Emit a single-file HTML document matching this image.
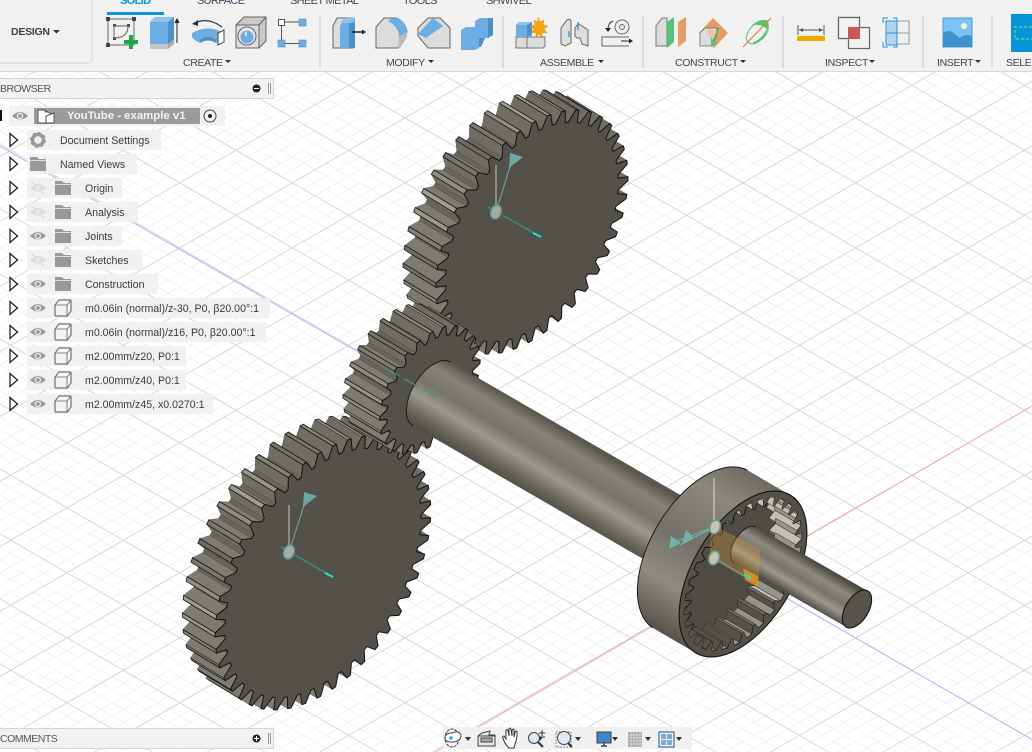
<!DOCTYPE html>
<html><head><meta charset="utf-8"><style>
html,body{margin:0;padding:0;width:1032px;height:752px;overflow:hidden;background:#fff;font-family:"Liberation Sans",sans-serif}
svg{position:absolute;left:0;top:0}
.t{position:absolute;white-space:nowrap}
.tab{font-size:11px;color:#3c4a5c;top:-5px;letter-spacing:-.65px}
.lab{font-size:10.5px;color:#445;top:57px;letter-spacing:-.35px}
.p{position:absolute;left:27px;height:20px;background:rgba(240,240,240,.92)}
.r{position:absolute;font-size:10.6px;color:#3a3a3a;white-space:nowrap;line-height:20px;margin-top:1px}
</style></head><body>
<svg id="scene" width="1032" height="752" xmlns="http://www.w3.org/2000/svg"></svg>

<div style="position:absolute;left:0;top:0;width:1032px;height:71px;background:#f1f1f1;border-bottom:1px solid #d9d9d9"></div>
<div style="position:absolute;left:-6px;top:-4px;width:95px;height:64px;border:2px solid #e2e2e2;border-radius:6px"></div>
<div class="t" style="left:11px;top:26px;font-size:10.5px;font-weight:bold;color:#3a3f48;letter-spacing:-.25px">DESIGN</div>
<div class="t tab" style="left:120px;color:#0696d7;font-weight:bold">SOLID</div>
<div class="t tab" style="left:197px">SURFACE</div>
<div class="t tab" style="left:290px">SHEET METAL</div>
<div class="t tab" style="left:403px">TOOLS</div>
<div class="t tab" style="left:486px">SHWIVEL</div>
<div style="position:absolute;left:107px;top:12px;width:57px;height:2.5px;background:#0696d7"></div>
<div class="t lab" style="left:183px">CREATE</div>
<div class="t lab" style="left:386px">MODIFY</div>
<div class="t lab" style="left:540px">ASSEMBLE</div>
<div class="t lab" style="left:675px">CONSTRUCT</div>
<div class="t lab" style="left:825px">INSPECT</div>
<div class="t lab" style="left:937px">INSERT</div>
<div class="t lab" style="left:1006px">SELECT</div>

<svg width="1032" height="72" xmlns="http://www.w3.org/2000/svg">
<g fill="#333"><path d="M53 30h7l-3.500 3.500z"/><path d="M225 60h6l-3 3z"/><path d="M428 60h6l-3 3z"/><path d="M598 60h6l-3 3z"/><path d="M740 60h6l-3 3z"/><path d="M869 60h6l-3 3z"/><path d="M975 60h6l-3 3z"/></g>
<g fill="#dcdcdc"><rect x="319" y="16" width="2" height="52"/><rect x="502" y="16" width="2" height="52"/><rect x="642" y="16" width="2" height="52"/><rect x="782" y="16" width="2" height="52"/><rect x="922" y="16" width="2" height="52"/><rect x="991" y="16" width="2" height="52"/></g>

<!-- create sketch -->
<rect x="108" y="19" width="26" height="26" fill="none" stroke="#666"/>
<g fill="#444"><rect x="106" y="17" width="4" height="4"/><rect x="132" y="17" width="4" height="4"/><rect x="106" y="43" width="4" height="4"/><rect x="113" y="24" width="3" height="3"/><rect x="113" y="37" width="3" height="3"/><rect x="127" y="24" width="3" height="3"/></g>
<path d="M114 38V26H128Q128 38 114 38" fill="none" stroke="#777" stroke-width="1.200"/>
<path d="M131 35v14M124 42h14" stroke="#1fa648" stroke-width="4"/>
<!-- extrude -->
<path d="M150 44V22l5-5h19v23l-6 4z" fill="#6caee3"/><path d="M168 22v22l6-5V17z" fill="#4c90c8"/><path d="M150 22l5-5h19l-6 5z" fill="#8cc3ec"/>
<path d="M150 44h18v5h-18z" fill="#c4c4c4"/><path d="M168 44l6-5v5l-6 5z" fill="#aaa"/>
<path d="M177 43V20M175 23l2-4 2 4" stroke="#222" fill="#222"/>
<!-- revolve -->
<path d="M192 33q16-9 32 0l0 4q-4 6-8 6-8-5-16 0-5-2-8-6z" fill="#6caee3"/><path d="M200 43q0-3 0-3 8-6 16 0v3q-8-5-16 0z" fill="#4c90c8"/>
<path d="M218 33l6-3v12l-6 3z" fill="#fff" stroke="#444"/>
<path d="M193 24q14-8 29 3" fill="none" stroke="#333" stroke-width="1.200"/><path d="M192 24l6-4v6z" fill="#333"/>
<!-- hole -->
<path d="M236 25l8-8h22v24l-7 7h-23z" fill="#c9c9c9" stroke="#666"/><path d="M236 25h23v23h-23z" fill="#dcdcdc" stroke="#666"/><path d="M259 25l7-8" stroke="#666"/>
<circle cx="247" cy="36" r="9" fill="#e8e8e8" stroke="#666"/><circle cx="247" cy="37" r="6.500" fill="#6caee3"/><path d="M247 31a6 6 0 0 0-3 3l3 3z" fill="#e4e4e4"/>
<!-- pattern -->
<rect x="278.500" y="19.500" width="6" height="6" fill="#fff" stroke="#555"/><g fill="#6caee3" stroke="#4b8fc8" stroke-width=".6"><rect x="299" y="19" width="7" height="7"/><rect x="278" y="40" width="7" height="7"/><rect x="299" y="40" width="7" height="7"/></g><path d="M285 22h14M281.500 26v14M285 43.500h14" stroke="#555"/>
<!-- press pull -->
<path d="M333 48V26l4-8h16v30z" fill="#dcdcdc" stroke="#666"/><path d="M340 48V26l5-8h10v30z" fill="#6caee3"/><path d="M349 23h6v25h-6z" fill="#4c90c8"/><path d="M340 23h11l4-5h-10z" fill="#8cc3ec"/>
<path d="M352 32h10" stroke="#222" stroke-width="1.500"/><path d="M362 29.500l4 2.500-4 2.500z" fill="#222"/>
<!-- fillet -->
<path d="M376 48V27l8-9h12q9 3 11 14l-2 4-7 12z" fill="#dcdcdc" stroke="#666"/><path d="M388 21q3-3 8-3 10 3 11 14l-8 5q0-10-11-16z" fill="#6caee3"/><path d="M399 37l8-5v5l-7 11h-2z" fill="#bbb"/>
<!-- chamfer -->
<path d="M418 36V28l10-10h12l10 10v20h-22z" fill="#dcdcdc" stroke="#666"/><path d="M418 34l15-16 10 8-17 12z" fill="#6caee3"/>
<!-- combine -->
<path d="M461 30l5-3h9v-6l5-3h13v17l-5 3h-9v10l-4 2h-14z" fill="#6caee3"/><path d="M488 18h5v17l-5 3zM479 38h6l-4 9h-2z" fill="#4c90c8"/>
<!-- assemble -->
<path d="M516 37h29v9l-2 2h-27z" fill="#dcdcdc" stroke="#777"/><path d="M527 37v11" stroke="#777"/><path d="M516 25l3-3h13v15h-16z" fill="#6caee3"/><path d="M527 25l5-3v12l-5 3z" fill="#4c90c8"/><path d="M516 25l3-3h13l-5 3z" fill="#8cc3ec"/>
<path d="M538 17l2 5 4-2-1 5 5 1-4 3 3 4-5-.5 0 5-3-3.500-3 3.500v-5l-5 .5 3-4-4-3 5-1-1-5 4 2z" fill="#f5a30f" stroke="#e08a00" stroke-width=".4"/>
<path d="M561 44V28l6-8q4-2 4 2v21l-6 3z" fill="#ddd" stroke="#666"/><path d="M575 36V28l3-4 1 0 9 6v16l-6-2-2-6h-3z" fill="#ddd" stroke="#666"/><path d="M569 31v6M578 22v8" stroke="#1c8fd6" stroke-width="1.200"/>
<circle cx="622" cy="27" r="7" fill="none" stroke="#666"/><circle cx="622" cy="27" r="2.500" fill="none" stroke="#666"/><path d="M613 21q-5 2-5 8" fill="none" stroke="#333"/><path d="M605 28h6l-3 4z" fill="#222"/><path d="M629 37h-27v9h27" fill="none" stroke="#666"/><path d="M621 41h8" stroke="#222"/><path d="M629 38.500l4 2.500-4 2.500z" fill="#222"/>
<!-- construct -->
<path d="M656 46V26l6-8h5v28z" fill="#dcdcdc" stroke="#777"/><path d="M667 22l7-5v25l-7 6z" fill="#58c178"/><path d="M678 22l8-5v24l-8 6z" fill="#e49c64"/>
<path d="M713 18l15 15-14 15-15-15z" fill="#e49c64"/><path d="M700 33l5-5 12 0-1 10-5 8h-11z" fill="#ddd" stroke="#666" stroke-width=".8"/><path d="M706 28l11 3-5 12z" fill="#e8c8a8"/><path d="M711 45l8-17" stroke="#3bb868" stroke-width="1.200"/><path d="M711 38l6 5-6 4z" fill="#58c178"/>
<path d="M746 38q3-13 15-17 7-2 7 3 2 12-12 19-8 3-10-5z" fill="none" stroke="#58c178" stroke-width="1"/><path d="M752 25q8-7 15-4 3 3 0 9-3-6-15-5z" fill="#58c178"/><path d="M753 42q8-2 13-12l1 0q-3 11-14 14z" fill="#58c178"/><path d="M743 47l28-29" stroke="#e4803c" stroke-width="1.200"/>
<!-- inspect -->
<rect x="797" y="36" width="28" height="5" fill="#f5a800"/><path d="M798 25v10M824 25v10" stroke="#555"/><path d="M799 30h24" stroke="#555"/><path d="M799 30l4-2v4zM823 30l-4-2v4z" fill="#555"/>
<rect x="838.500" y="17.500" width="21" height="21" fill="none" stroke="#666" stroke-width="1.200"/><rect x="848.500" y="27.500" width="21" height="21" fill="#f1f1f1" stroke="#666" stroke-width="1.200"/><path d="M838 18h21v10h-11v10h-10z" fill="#f1f1f1"/><path d="M838.500 38.500v-21h21v10M848.500 38.500h-10" fill="none" stroke="#666" stroke-width="1.200"/><rect x="848" y="27" width="12" height="12" fill="#cc5555"/>
<rect x="886" y="21" width="11" height="12" fill="#b2d4ef" stroke="#2d90d8"/><rect x="886" y="33" width="11" height="12" fill="#b2d4ef" stroke="#2d90d8"/><path d="M897 21h12v12h-12M897 33h12v11h-12" fill="none" stroke="#999"/><path d="M883 23v-5h5M883 42v5h5M893 18h4v29h-4" fill="none" stroke="#2d90d8"/>
<!-- insert -->
<rect x="943" y="18" width="29" height="29" fill="#7cc2f2" stroke="#4a9ad2"/><path d="M943 47V34q4-5 9-2 4 3 8 6 5-5 12-2v11z" fill="#4092cc"/><circle cx="964" cy="26" r="3" fill="#f6f5d0"/>
<!-- select -->
<rect x="1011" y="14" width="21" height="38" fill="#0696d7"/><path d="M1032 27h-17v12h17" fill="none" stroke="#8ce07a" stroke-dasharray="3 2"/>
</svg>

<!-- Browser panel -->
<div style="position:absolute;left:-2px;top:78px;width:274px;height:19px;background:#f2f2f2;border:1px solid #d4d4d4"></div>
<div class="t" style="left:0;top:83px;font-size:10.5px;color:#555;letter-spacing:-.5px">BROWSER</div>
<svg width="280" height="100" style="top:78px"><circle cx="256.500" cy="10.500" r="4" fill="#222"/><path d="M254 10.500h5" stroke="#fff"/><path d="M268.500 5v11M270.500 5v11" stroke="#999"/></svg>

<div class="p" style="left:9px;top:106px;width:216px"></div>
<div style="position:absolute;left:34px;top:108px;width:166px;height:16px;background:#9b9b9b"></div>
<div class="t" style="left:67px;top:110px;font-size:11.4px;font-weight:bold;color:#f4f4f4">YouTube - example v1</div>
<div class="p" style="top:130px;width:134px"></div><div class="r" style="left:60px;top:130px">Document Settings</div>
<div class="p" style="top:154px;width:110px"></div><div class="r" style="left:60px;top:154px">Named Views</div>
<div class="p" style="top:178px;width:95px"></div><div class="r" style="left:85px;top:178px">Origin</div>
<div class="p" style="top:202px;width:111px"></div><div class="r" style="left:85px;top:202px">Analysis</div>
<div class="p" style="top:226px;width:95px"></div><div class="r" style="left:85px;top:226px">Joints</div>
<div class="p" style="top:250px;width:115px"></div><div class="r" style="left:85px;top:250px">Sketches</div>
<div class="p" style="top:274px;width:131px"></div><div class="r" style="left:85px;top:274px">Construction</div>
<div class="p" style="top:298px;width:243px"></div><div class="r" style="left:85px;top:298px">m0.06in (normal)/z-30, P0, β20.00°:1</div>
<div class="p" style="top:322px;width:239px"></div><div class="r" style="left:85px;top:322px">m0.06in (normal)/z16, P0, β20.00°:1</div>
<div class="p" style="top:346px;width:159px"></div><div class="r" style="left:85px;top:346px">m2.00mm/z20, P0:1</div>
<div class="p" style="top:370px;width:159px"></div><div class="r" style="left:85px;top:370px">m2.00mm/z40, P0:1</div>
<div class="p" style="top:394px;width:186px"></div><div class="r" style="left:85px;top:394px">m2.00mm/z45, x0.0270:1</div>

<svg width="300" height="430">
<defs>
<g id="tri"><path d="M10 -6.500L17.500 0 10 6.500z" fill="#fff" stroke="#222" stroke-width="1.300"/></g>
<g id="eye"><path d="M-8 0Q0-8 8 0 0 7-8 0z" fill="#999"/><circle r="3.200" fill="#e8e8e8"/><circle r="1.900" fill="#999"/></g>
<g id="eyeoff" opacity=".55"><path d="M-8 0Q0-8 8 0 0 7-8 0z" fill="#ccc"/><circle r="2.500" fill="#eee"/><path d="M-6-6L6 6" stroke="#ccc" stroke-width="1.500"/></g>
<g id="fold"><path d="M-8-7h7l2 2h7v12h-16z" fill="#999"/><path d="M-8-3.500h16" stroke="#eee" stroke-width=".8"/></g>
<g id="box"><path d="M-8-3l4-5h11q1 0 1 1v10l-3 4q0 1-1 1h-11q-1 0-1-1z" fill="#f4f4f4" stroke="#555"/><path d="M-8-3h12v11M4-3l4-5" fill="none" stroke="#666" stroke-width=".8"/></g>
</defs>
<rect x="0" y="110" width="2" height="11" fill="#111"/>
<use href="#eye" x="20" y="116"/>
<path d="M38 110h6l2 2v-1l5 3 3-1v10h-16z" fill="#fff" stroke="#555"/><path d="M46 116l8-3M46 116v8" stroke="#555"/>
<circle cx="210" cy="116" r="6" fill="none" stroke="#444"/><circle cx="210" cy="116" r="2" fill="#222"/>
<use href="#tri" y="140"/><use href="#tri" y="164"/><use href="#tri" y="188"/><use href="#tri" y="212"/><use href="#tri" y="236"/><use href="#tri" y="260"/><use href="#tri" y="284"/><use href="#tri" y="308"/><use href="#tri" y="332"/><use href="#tri" y="356"/><use href="#tri" y="380"/><use href="#tri" y="404"/>
<circle cx="38" cy="140" r="5.500" fill="none" stroke="#999" stroke-width="3.500"/><circle cx="38" cy="140" r="7" fill="none" stroke="#999" stroke-width="2" stroke-dasharray="2.500 3"/>
<use href="#fold" x="38" y="164"/>
<use href="#eyeoff" x="38" y="188"/><use href="#eyeoff" x="38" y="212"/><use href="#eye" x="38" y="236"/><use href="#eyeoff" x="38" y="260"/><use href="#eye" x="38" y="284"/><use href="#eye" x="38" y="308"/><use href="#eye" x="38" y="332"/><use href="#eye" x="38" y="356"/><use href="#eye" x="38" y="380"/><use href="#eye" x="38" y="404"/>
<use href="#fold" x="63" y="188"/><use href="#fold" x="63" y="212"/><use href="#fold" x="63" y="236"/><use href="#fold" x="63" y="260"/><use href="#fold" x="63" y="284"/>
<use href="#box" x="63" y="308"/><use href="#box" x="63" y="332"/><use href="#box" x="63" y="356"/><use href="#box" x="63" y="380"/><use href="#box" x="63" y="404"/>
</svg>

<!-- Comments -->
<div style="position:absolute;left:-2px;top:728px;width:274px;height:19px;background:#f2f2f2;border:1px solid #d4d4d4"></div>
<div class="t" style="left:0;top:733px;font-size:10.5px;color:#555;letter-spacing:-.5px">COMMENTS</div>
<!-- Nav bar -->
<div style="position:absolute;left:443px;top:727px;width:249px;height:22px;background:#f0f0f0"></div>
<svg width="1032" height="752">
<circle cx="256.500" cy="738.500" r="4" fill="#222"/><path d="M254 738.500h5M256.500 736v5" stroke="#fff"/><path d="M268.500 733v11M270.500 733v11" stroke="#999"/>
<g transform="translate(430,720)">
<ellipse cx="22" cy="18" rx="7" ry="9" fill="none" stroke="#444" stroke-dasharray="3 1"/><path d="M15 18q0-5 7-5 7-3 9 2 0 7-9 7-7 0-7-4z" fill="#fff" stroke="#444"/><path d="M19 18h4M21 16v4" stroke="#1a8fd6" stroke-width="1.300"/>
<path d="M35 17h6l-3 4zM107 17h6l-3 4zM145 17h6l-3 4zM182 17h6l-3 4zM215 17h6l-3 4zM246 17h6l-3 4z" fill="#333"/>
<path d="M48 16l4-3 8-2-1 4h6v11H48z" fill="#e6e6e6" stroke="#444"/><rect x="51" y="18" width="11" height="4" fill="#aaa" stroke="#444"/><path d="M48 16h17" stroke="#444"/>
<path d="M79 28q-5-5-6-10-1-2 1-2l2 3V11q0-2 2-1l1 6V9q1-2 2 0l1 7V10q2-2 2 0v7l1-5q2-2 2 0 0 8-2 12l-1 4z" fill="#fff" stroke="#333"/>
<circle cx="104" cy="18" r="5.500" fill="#dfeaf4" stroke="#444"/><path d="M108 22l5 5" stroke="#333" stroke-width="2"/><path d="M109 13h6M112 10v6M109 17h6" stroke="#333"/>
<rect x="126" y="12" width="15" height="15" fill="none" stroke="#666" stroke-dasharray="1.500 1.500"/><circle cx="134" cy="18" r="6.500" fill="#dfeaf4" stroke="#444"/><path d="M138 23l4 4" stroke="#333" stroke-width="2"/>
<rect x="167" y="12" width="14" height="11" fill="#3a88c8" stroke="#444"/><path d="M171 26h6M174 23v3" stroke="#444" stroke-width="1.500"/>
<rect x="198" y="12" width="14" height="15" fill="#a8a8a8"/><path d="M201 12v15M204 12v15M207 12v15M210 12v15M198 15h14M198 18h14M198 21h14M198 24h14" stroke="#eee" stroke-width=".6"/>
<rect x="229" y="12" width="15" height="15" fill="#f0f0f0" stroke="#3f6ea0" stroke-width="1.200"/><g fill="#7faad4"><rect x="231" y="14" width="5" height="5"/><rect x="237" y="14" width="5" height="5"/><rect x="231" y="20" width="5" height="5"/><rect x="237" y="20" width="5" height="5"/></g>
</g>
</svg>

<script>
(function(){
var S=document.getElementById('scene'),h='';
var U=[.515,-.857],V=[.857,.515],rot=-59;
function fmt(p){return p[0].toFixed(1)+' '+p[1].toFixed(1)}
function P(c,a,b,t,r){return [c[0]+U[0]*a*r*Math.cos(t)+V[0]*b*r*Math.sin(t),c[1]+U[1]*a*r*Math.cos(t)+V[1]*b*r*Math.sin(t)]}
function pts(c,a,b,z,ri){var o=[],p=2*Math.PI/z;for(var i=0;i<z;i++){var t=i*p;
 o.push(P(c,a,b,t-.38*p,ri),P(c,a,b,t-.12*p,1),P(c,a,b,t+.12*p,1),P(c,a,b,t+.38*p,ri));}return o}
function poly(o){return 'M'+o.map(fmt).join('L')+'Z'}
function col(v){v=Math.max(45,Math.min(205,v));return 'rgb('+(v|0)+','+((v-3)|0)+','+((v-12)|0)+')'}
function gear(c,a,b,z,ri,d){var o=pts(c,a,b,z,ri),q=[],n=o.length,dl=Math.hypot(d[0],d[1]);
 for(var i=0;i<n;i++){var A=o[i],B=o[(i+1)%n],e=[B[0]-A[0],B[1]-A[1]],l=Math.hypot(e[0],e[1])||1,m=[e[1]/l,-e[0]/l];
  var dt=(m[0]*d[0]+m[1]*d[1])/dl;
  if(dt>-.02){var k=i%4,v;
   if(k==1)v=136+16*Math.sin(i*.23)+10*Math.sin(i*1.3);
   else if(k==0)v=112;else if(k==2)v=126;else v=104;
   q.push({p:[A,B,[B[0]+d[0],B[1]+d[1]],[A[0]+d[0],A[1]+d[1]]],v:v,k:k,o:(A[0]+B[0])*d[0]+(A[1]+B[1])*d[1]});}}
 q.sort(function(x,y){return x.o-y.o});
 q.forEach(function(x){h+='<path d="'+poly(x.p)+'" fill="'+col(x.v)+'" stroke="'+(x.k==1?'#161616':'#3a3833')+'" stroke-width="'+(x.k==1?.8:.3)+'" stroke-linejoin="round"/>'});
 h+='<path d="'+poly(o)+'" fill="#54514a" stroke="#111" stroke-width="1" stroke-linejoin="round"/>';
}
var gid=0;
function cyl(c1,c2,a,b,stops,face,cap){gid++;var p=[c1[0]+U[0]*a,c1[1]+U[1]*a],q=[c1[0]-U[0]*a,c1[1]-U[1]*a],
 r=[c2[0]+U[0]*a,c2[1]+U[1]*a],s=[c2[0]-U[0]*a,c2[1]-U[1]*a];
 var g='<linearGradient id="g'+gid+'" gradientUnits="userSpaceOnUse" x1="'+p[0]+'" y1="'+p[1]+'" x2="'+q[0]+'" y2="'+q[1]+'">';
 stops.forEach(function(x){g+='<stop offset="'+x[0]+'" stop-color="'+x[1]+'"/>'});g+='</linearGradient>';
 var arc='M'+fmt(q)+'A'+a+' '+b+' '+rot+' 0 1 '+fmt(p);
 h+=g+'<path d="M'+fmt(p)+'L'+fmt(r)+'L'+fmt(s)+'L'+fmt(q)+'A'+a+' '+b+' '+rot+' 0 1 '+fmt(p)+'Z" fill="url(#g'+gid+')"/>';
 if(cap)h+='<path d="'+arc+'" fill="none" stroke="#1a1a1a" stroke-width="1"/>';
 if(face)h+='<ellipse cx="'+c2[0]+'" cy="'+c2[1]+'" rx="'+a+'" ry="'+b+'" transform="rotate('+rot+' '+c2[0]+' '+c2[1]+')" fill="'+face+'" stroke="#111" stroke-width="1.100"/>';
}
function line(m,k,c,w){var x0=0,x1=1032,y0=k,y1=m*1032+k;
 function cl(x){return Math.max(0,Math.min(1032,x))}
 var a=cl((0-k)/m),b=cl((752-k)/m);x0=Math.min(a,b);x1=Math.max(a,b);
 y0=m*x0+k;y1=m*x1+k;if(x1<=x0||Math.max(y0,y1)<0||Math.min(y0,y1)>752)return;
 h+='<path d="M'+x0.toFixed(1)+' '+y0.toFixed(1)+'L'+x1.toFixed(1)+' '+y1.toFixed(1)+'" stroke="'+c+'" stroke-width="'+w+'"/>';}
var s=.577,i,mj;
for(i=-80;i<120;i++){mj=((i%5)+5)%5==0;
 if(!mj){line(s,-375.9+13*i,'#f1f1f1',.9);line(-s,546.5+13*i,'#f1f1f1',.9);}}
for(i=-80;i<120;i++){mj=((i%5)+5)%5==0;
 if(mj){line(s,-375.9+13*i,'#d6d6d6',1);line(-s,546.5+13*i,'#d6d6d6',1);}}
line(.575,146,'#b4b4f6',1);
line(-.58,1004.6,'#f4a8a8',1);
var sh=[[0,'#5a574e'],[.18,'#85837a'],[.42,'#77746a'],[.62,'#9b9990'],[.82,'#6d6a60'],[1,'#4e4b45']];
gear([532,232],134.5,77.5,40,.9,[-33,-20]);
gear([323,573],151,87,45,.91,[-33,-20]);
gear([430,390],71,40,24,.86,[-37,-22]);
cyl([432,394],[705,552],37,20,sh,null,true);
var hc=[743,574],hb=[700,549];
cyl(hb,hc,92,50,[[0,'#6e6b61'],[.2,'#8b897e'],[.5,'#74716a'],[.75,'#8e8c82'],[1,'#55524a']],'#54514a',true);
var inner=(function(){var o=[],z=30,p=2*Math.PI/z;for(var i=0;i<z;i++){var t=i*p;o.push(P(hc,92,50,t-.3*p,.92),P(hc,92,50,t-.09*p,.82),P(hc,92,50,t+.09*p,.82),P(hc,92,50,t+.3*p,.92));}return o})();
h+='<clipPath id="hole"><path d="'+poly(inner)+'"/></clipPath>';
h+='<path d="'+poly(inner)+'" fill="#4f4c46" stroke="#111" stroke-width=".9"/>';
h+='<g clip-path="url(#hole)">';
var d2=[-26,-15],n2=inner.length;
for(i=0;i<n2;i++){var A=inner[i],B=inner[(i+1)%n2],e=[B[0]-A[0],B[1]-A[1]],m=[e[1],-e[0]];
 if(m[0]*d2[0]+m[1]*d2[1]<0){var kk=i%4,v=kk==0?195:kk==1?110:kk==2?85:150;
  h+='<path d="'+poly([A,B,[B[0]+d2[0],B[1]+d2[1]],[A[0]+d2[0],A[1]+d2[1]]])+'" fill="'+col(v)+'" stroke="#222" stroke-width=".5"/>';}}
h+='</g>';
var sh2=[[0,'#4e4b44'],[.25,'#8e8c81'],[.5,'#77746a'],[.7,'#9a988e'],[1,'#45423c']];
cyl([745,545],[857,609],21,11.5,sh2,'#56534c',true);
h+='<path d="M712 525L760 550 758 585 710 557z" fill="rgba(225,160,60,.3)" stroke="rgba(200,140,50,.5)" stroke-width=".6"/>';
h+='<path d="M743 568L758 576 758 587 745 580z" fill="rgba(235,150,30,.8)"/><path d="M745 574l6 4" stroke="#2fe0b0" stroke-width="2"/>';
function ax(x,y,tx,ty,ex,ey){
 h+='<path d="M'+x+' '+y+'L'+x+' '+(y-47)+'" stroke="#c9c7c0" stroke-width="1"/>';
 h+='<path d="M'+x+' '+y+'L'+tx+' '+ty+'" stroke="#6fa8a4" stroke-width="1"/>';
 h+='<path d="M'+(tx-3)+' '+(ty+8)+'L'+(tx-2)+' '+(ty-7)+'L'+(tx+11)+' '+(ty-3)+'z" fill="#6da7a6"/>';
 h+='<path d="M'+(x-8)+' '+(y-5)+'L'+ex+' '+ey+'" stroke="#2f8f88" stroke-width="1.500" stroke-dasharray="13 4 40 0"/>';
 h+='<path d="M'+(ex-8)+' '+(ey-4)+'L'+ex+' '+ey+'" stroke="#20e6d8" stroke-width="2"/>';
 h+='<ellipse cx="'+x+'" cy="'+y+'" rx="5" ry="7" transform="rotate(20 '+x+' '+y+')" fill="#a9aaa6" stroke="#5fa09c" stroke-width="1.500"/>';
}
ax(496,212,512,160,541,237);
ax(289,552,306,499,333,577);
h+='<path d="M385 368L437 397" stroke="#3d908a" stroke-width="1.300" stroke-dasharray="16 6"/>';
h+='<path d="M714 478V527" stroke="#ddd" stroke-width="1"/><path d="M714 527L680 545M714 558L750 579M672 543L714 527" stroke="#6fb5b0" stroke-width="1"/>';
h+='<ellipse cx="715" cy="527" rx="5" ry="7" transform="rotate(20 715 527)" fill="#c9c2a8" stroke="#5fa09c" stroke-width="1.500"/><ellipse cx="714" cy="558" rx="5" ry="7" transform="rotate(20 714 558)" fill="#c9c2a8" stroke="#5fa09c" stroke-width="1.500"/>';
h+='<path d="M671 536L669 549 681 543zM686 530L682 543 694 538z" fill="#73b0ae"/>';
S.innerHTML=h;
})();
</script>
</body></html>
